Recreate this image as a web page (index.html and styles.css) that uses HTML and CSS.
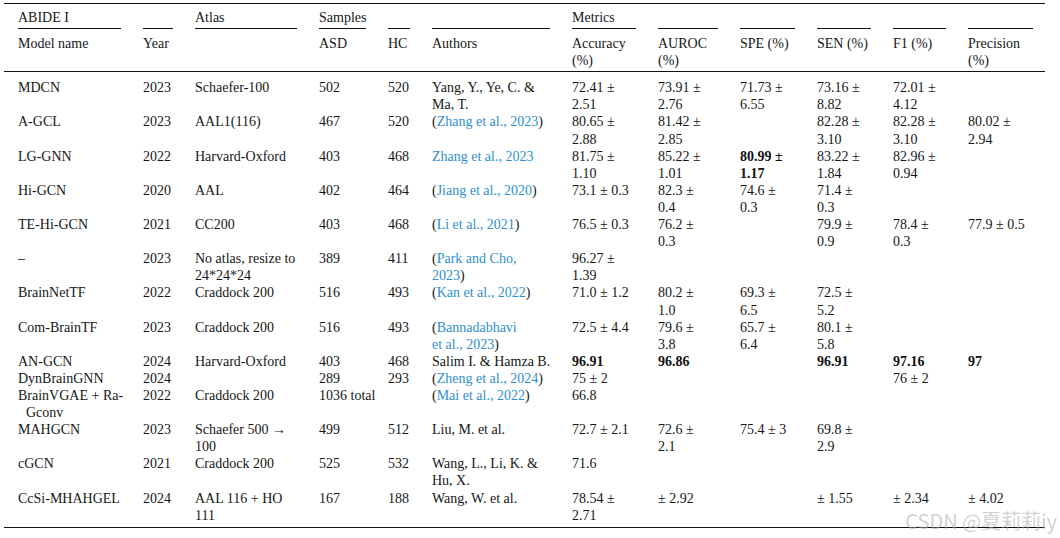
FILE: index.html
```html
<!DOCTYPE html>
<html lang="en">
<head>
<meta charset="utf-8">
<title>ABIDE I comparison</title>
<link rel="stylesheet" href="styles.css">
</head>
<body>
<div class="page">
  <table class="data">
    <colgroup>
      <col class="c1"><col class="c2"><col class="c3"><col class="c4"><col class="c5"><col class="c6">
      <col class="c7"><col class="c8"><col class="c9"><col class="c10"><col class="c11"><col class="c12">
    </colgroup>
    <thead>
      <tr class="head-top">
        <th><div class="rule">ABIDE I</div></th>
        <th><div class="rule"></div></th>
        <th><div class="rule">Atlas</div></th>
        <th><div class="rule">Samples</div></th>
        <th><div class="rule"></div></th>
        <th><div class="rule"></div></th>
        <th><div class="rule">Metrics</div></th>
        <th><div class="rule"></div></th>
        <th><div class="rule"></div></th>
        <th><div class="rule"></div></th>
        <th><div class="rule"></div></th>
        <th><div class="rule"></div></th>
      </tr>
      <tr class="head-sub">
        <th>Model name</th>
        <th>Year</th>
        <th></th>
        <th>ASD</th>
        <th>HC</th>
        <th>Authors</th>
        <th>Accuracy<br>(%)</th>
        <th>AUROC<br>(%)</th>
        <th>SPE (%)</th>
        <th>SEN (%)</th>
        <th>F1 (%)</th>
        <th>Precision<br>(%)</th>
      </tr>
    </thead>
    <tbody>
      <tr>
        <td>MDCN</td><td>2023</td><td>Schaefer-100</td><td>502</td><td>520</td>
        <td>Yang, Y., Ye, C. &amp;<br>Ma, T.</td>
        <td>72.41 ±<br>2.51</td><td>73.91 ±<br>2.76</td><td>71.73 ±<br>6.55</td><td>73.16 ±<br>8.82</td><td>72.01 ±<br>4.12</td><td></td>
      </tr>
      <tr>
        <td>A-GCL</td><td>2023</td><td>AAL1(116)</td><td>467</td><td>520</td>
        <td>(<a class="ref" href="#">Zhang et al., 2023</a>)</td>
        <td>80.65 ±<br>2.88</td><td>81.42 ±<br>2.85</td><td></td><td>82.28 ±<br>3.10</td><td>82.28 ±<br>3.10</td><td>80.02 ±<br>2.94</td>
      </tr>
      <tr>
        <td>LG-GNN</td><td>2022</td><td>Harvard-Oxford</td><td>403</td><td>468</td>
        <td><a class="ref" href="#">Zhang et al., 2023</a></td>
        <td>81.75 ±<br>1.10</td><td>85.22 ±<br>1.01</td><td><b>80.99 ±<br>1.17</b></td><td>83.22 ±<br>1.84</td><td>82.96 ±<br>0.94</td><td></td>
      </tr>
      <tr>
        <td>Hi-GCN</td><td>2020</td><td>AAL</td><td>402</td><td>464</td>
        <td>(<a class="ref" href="#">Jiang et al., 2020</a>)</td>
        <td>73.1 ± 0.3</td><td>82.3 ±<br>0.4</td><td>74.6 ±<br>0.3</td><td>71.4 ±<br>0.3</td><td></td><td></td>
      </tr>
      <tr>
        <td>TE-Hi-GCN</td><td>2021</td><td>CC200</td><td>403</td><td>468</td>
        <td>(<a class="ref" href="#">Li et al., 2021</a>)</td>
        <td>76.5 ± 0.3</td><td>76.2 ±<br>0.3</td><td></td><td>79.9 ±<br>0.9</td><td>78.4 ±<br>0.3</td><td>77.9 ± 0.5</td>
      </tr>
      <tr>
        <td>–</td><td>2023</td><td>No atlas, resize to<br>24*24*24</td><td>389</td><td>411</td>
        <td>(<a class="ref" href="#">Park and Cho,<br>2023</a>)</td>
        <td>96.27 ±<br>1.39</td><td></td><td></td><td></td><td></td><td></td>
      </tr>
      <tr>
        <td>BrainNetTF</td><td>2022</td><td>Craddock 200</td><td>516</td><td>493</td>
        <td>(<a class="ref" href="#">Kan et al., 2022</a>)</td>
        <td>71.0 ± 1.2</td><td>80.2 ±<br>1.0</td><td>69.3 ±<br>6.5</td><td>72.5 ±<br>5.2</td><td></td><td></td>
      </tr>
      <tr>
        <td>Com-BrainTF</td><td>2023</td><td>Craddock 200</td><td>516</td><td>493</td>
        <td>(<a class="ref" href="#">Bannadabhavi<br>et al., 2023</a>)</td>
        <td>72.5 ± 4.4</td><td>79.6 ±<br>3.8</td><td>65.7 ±<br>6.4</td><td>80.1 ±<br>5.8</td><td></td><td></td>
      </tr>
      <tr>
        <td>AN-GCN</td><td>2024</td><td>Harvard-Oxford</td><td>403</td><td>468</td>
        <td>Salim I. &amp; Hamza B.</td>
        <td><b>96.91</b></td><td><b>96.86</b></td><td></td><td><b>96.91</b></td><td><b>97.16</b></td><td><b>97</b></td>
      </tr>
      <tr>
        <td>DynBrainGNN</td><td>2024</td><td></td><td>289</td><td>293</td>
        <td>(<a class="ref" href="#">Zheng et al., 2024</a>)</td>
        <td>75 ± 2</td><td></td><td></td><td></td><td>76 ± 2</td><td></td>
      </tr>
      <tr>
        <td><div class="hang">BrainVGAE + Ra-<br>Gconv</div></td><td>2022</td><td>Craddock 200</td><td>1036 total</td><td></td>
        <td>(<a class="ref" href="#">Mai et al., 2022</a>)</td>
        <td>66.8</td><td></td><td></td><td></td><td></td><td></td>
      </tr>
      <tr>
        <td>MAHGCN</td><td>2023</td><td>Schaefer 500 →<br>100</td><td>499</td><td>512</td>
        <td>Liu, M. et al.</td>
        <td>72.7 ± 2.1</td><td>72.6 ±<br>2.1</td><td>75.4 ± 3</td><td>69.8 ±<br>2.9</td><td></td><td></td>
      </tr>
      <tr>
        <td>cGCN</td><td>2021</td><td>Craddock 200</td><td>525</td><td>532</td>
        <td>Wang, L., Li, K. &amp;<br>Hu, X.</td>
        <td>71.6</td><td></td><td></td><td></td><td></td><td></td>
      </tr>
      <tr>
        <td>CcSi-MHAHGEL</td><td>2024</td><td>AAL 116 + HO<br>111</td><td>167</td><td>188</td>
        <td>Wang, W. et al.</td>
        <td>78.54 ±<br>2.71</td><td>± 2.92</td><td></td><td>± 1.55</td><td>± 2.34</td><td>± 4.02</td>
      </tr>
    </tbody>
  </table>
  <div class="watermark">CSDN @夏莉莉iy</div>
</div>
</body>
</html>
```

FILE: styles.css
```css
html, body {
  margin: 0;
  padding: 0;
  background: #ffffff;
}

body {
  font-family: "Liberation Serif", "Times New Roman", serif;
  font-size: 14px;
  color: #161616;
}

.page {
  position: relative;
  width: 1060px;
  height: 538px;
  box-sizing: border-box;
  padding: 3px 0 0 4px;
}

.data {
  width: 1041px;
  table-layout: fixed;
  border-collapse: collapse;
  border-top: 1px solid #111;
  border-bottom: 1px solid #111;
}

.c1 { width: 139px; }
.c2 { width: 52px; }
.c3 { width: 124px; }
.c4 { width: 69px; }
.c5 { width: 44px; }
.c6 { width: 140px; }
.c7 { width: 86px; }
.c8 { width: 82px; }
.c9 { width: 77px; }
.c10 { width: 76px; }
.c11 { width: 75px; }
.c12 { width: 77px; }

.data th,
.data td {
  padding: 0 22px 0 0;
  vertical-align: top;
  text-align: left;
  font-weight: normal;
  line-height: 17.1px;
  white-space: nowrap;
}

.data th:first-child,
.data td:first-child {
  padding-left: 14px;
}

.data th:last-child,
.data td:last-child {
  padding-right: 12px;
}

.head-top th {
  padding-top: 5px;
}

.rule {
  min-height: 17.1px;
  padding-bottom: 2px;
  border-bottom: 1px solid #111;
}

.head-sub th {
  padding-top: 6px;
  padding-bottom: 2px;
  border-bottom: 1px solid #111;
}

.data tbody tr:first-child td {
  padding-top: 7px;
}

.data tbody tr:last-child td {
  padding-bottom: 3px;
}

.data b {
  font-weight: bold;
  color: #111;
}

.ref {
  color: #2f8fcb;
  text-decoration: none;
}

.hang {
  padding-left: 8px;
  text-indent: -8px;
}

.watermark {
  position: absolute;
  right: 3px;
  bottom: 6px;
  font-family: "Noto Sans CJK SC", "Noto Sans", sans-serif;
  font-size: 20px;
  line-height: 22px;
  color: rgba(170, 170, 170, 0.55);
  white-space: nowrap;
}
```
